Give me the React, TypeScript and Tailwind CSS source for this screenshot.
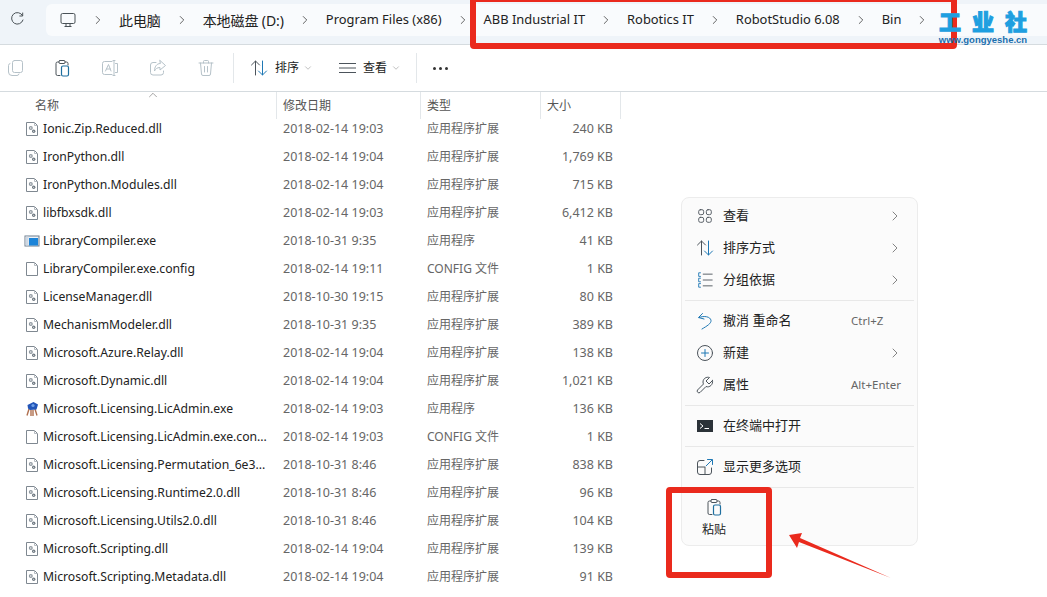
import { ChevronDown, ChevronRight, ChevronUp } from 'lucide-react';

const FONT = "font-['Noto_Sans','Noto_Sans_CJK_SC',sans-serif]";

const crumbs = [
  { label: '此电脑', cjk: true },
  { label: '本地磁盘 (D:)', cjk: true },
  { label: 'Program Files (x86)', cjk: false },
  { label: 'ABB Industrial IT', cjk: false },
  { label: 'Robotics IT', cjk: false },
  { label: 'RobotStudio 6.08', cjk: false },
  { label: 'Bin', cjk: false },
];

type Kind = 'dll' | 'file' | 'exe' | 'lic';

const files: { name: string; date: string; type: string; size: string; kind: Kind }[] = [
  { name: 'Ionic.Zip.Reduced.dll', date: '2018-02-14 19:03', type: '应用程序扩展', size: '240 KB', kind: 'dll' },
  { name: 'IronPython.dll', date: '2018-02-14 19:04', type: '应用程序扩展', size: '1,769 KB', kind: 'dll' },
  { name: 'IronPython.Modules.dll', date: '2018-02-14 19:04', type: '应用程序扩展', size: '715 KB', kind: 'dll' },
  { name: 'libfbxsdk.dll', date: '2018-02-14 19:03', type: '应用程序扩展', size: '6,412 KB', kind: 'dll' },
  { name: 'LibraryCompiler.exe', date: '2018-10-31 9:35', type: '应用程序', size: '41 KB', kind: 'exe' },
  { name: 'LibraryCompiler.exe.config', date: '2018-02-14 19:11', type: 'CONFIG 文件', size: '1 KB', kind: 'file' },
  { name: 'LicenseManager.dll', date: '2018-10-30 19:15', type: '应用程序扩展', size: '80 KB', kind: 'dll' },
  { name: 'MechanismModeler.dll', date: '2018-10-31 9:35', type: '应用程序扩展', size: '389 KB', kind: 'dll' },
  { name: 'Microsoft.Azure.Relay.dll', date: '2018-02-14 19:04', type: '应用程序扩展', size: '138 KB', kind: 'dll' },
  { name: 'Microsoft.Dynamic.dll', date: '2018-02-14 19:04', type: '应用程序扩展', size: '1,021 KB', kind: 'dll' },
  { name: 'Microsoft.Licensing.LicAdmin.exe', date: '2018-02-14 19:03', type: '应用程序', size: '136 KB', kind: 'lic' },
  { name: 'Microsoft.Licensing.LicAdmin.exe.con...', date: '2018-02-14 19:03', type: 'CONFIG 文件', size: '1 KB', kind: 'file' },
  { name: 'Microsoft.Licensing.Permutation_6e3...', date: '2018-10-31 8:46', type: '应用程序扩展', size: '838 KB', kind: 'dll' },
  { name: 'Microsoft.Licensing.Runtime2.0.dll', date: '2018-10-31 8:46', type: '应用程序扩展', size: '96 KB', kind: 'dll' },
  { name: 'Microsoft.Licensing.Utils2.0.dll', date: '2018-10-31 8:46', type: '应用程序扩展', size: '104 KB', kind: 'dll' },
  { name: 'Microsoft.Scripting.dll', date: '2018-02-14 19:04', type: '应用程序扩展', size: '139 KB', kind: 'dll' },
  { name: 'Microsoft.Scripting.Metadata.dll', date: '2018-02-14 19:04', type: '应用程序扩展', size: '91 KB', kind: 'dll' },
];

function FileIcon({ kind }: { kind: Kind }) {
  if (kind === 'exe') {
    return (
      <svg width="16" height="16" viewBox="0 0 16 16" className="shrink-0">
        <rect x="1" y="3" width="14" height="10" fill="#eef3f8" stroke="#6d7c8c" />
        <rect x="1.500" y="3.500" width="3" height="9" fill="#cfd8e2" />
        <rect x="5" y="5" width="9" height="7.500" fill="#1c84d8" />
      </svg>
    );
  }
  if (kind === 'lic') {
    return (
      <svg width="16" height="16" viewBox="0 0 16 16" className="shrink-0">
        <path d="M3 14.500L5 8M13 14.500L11 8M7 15V9M9 15V9" stroke="#b0704f" strokeWidth="1.400" fill="none" />
        <path d="M3.500 4L9.500 1L14 3.500L12.500 8.500L6 9L4 7.500Z" fill="#2255b8" />
        <circle cx="9" cy="4.500" r="1.600" fill="#6fa0e8" />
      </svg>
    );
  }
  return (
    <svg width="16" height="16" viewBox="0 0 16 16" className="shrink-0">
      <path d="M2.500 1.500H10.500L13.500 4.500V14.500H2.500Z" fill="#fff" stroke="#7f8891" />
      <path d="M10.500 1.500V4.500H13.500" fill="none" stroke="#b5bbc1" />
      {kind === 'dll' && (
        <g>
          <circle cx="6.800" cy="7" r="2" fill="#8f98a0" />
          <circle cx="6.800" cy="7" r="0.700" fill="#fff" />
          <circle cx="9.700" cy="10.200" r="1.700" fill="#6f7982" />
          <circle cx="9.700" cy="10.200" r="0.500" fill="#fff" />
        </g>
      )}
    </svg>
  );
}

function Ico({ size = 20, children }: { size?: number; children: React.ReactNode }) {
  return (
    <svg width={size} height={size} viewBox="0 0 20 20" fill="none" strokeLinecap="round" strokeLinejoin="round" className="shrink-0">
      {children}
    </svg>
  );
}

function PasteIcon() {
  const dark = '#4c545b';
  return (
    <Ico>
      <path d="M7 4H5.500A1.500 1.500 0 0 0 4 5.500V16A1.500 1.500 0 0 0 5.500 17.500H8" stroke={dark} />
      <path d="M13 4H14.500A1.500 1.500 0 0 1 16 5.500V7" stroke={dark} />
      <rect x="7" y="2.500" width="6" height="3" rx="1" stroke={dark} />
      <rect x="9.500" y="8" width="7" height="10" rx="1.500" stroke="#1f6f9f" strokeWidth="1.200" />
    </Ico>
  );
}

function SortIcon() {
  return (
    <Ico>
      <path d="M6.500 17V3M2.500 7L6.500 3L10.500 7" stroke="#4c545b" />
      <path d="M13.500 3V17M9.500 13L13.500 17L17.500 13" stroke="#1f78b4" />
    </Ico>
  );
}

function Toolbar() {
  const faint = '#b6c2c9';
  return (
    <div className="h-[47px] flex items-center pl-[6px] border-b border-[#d5dbdf] bg-white">
      <div className="w-[227px] flex items-center">
        <div className="w-[19px] flex justify-center">
          <Ico>
            <rect x="6.500" y="2.500" width="10" height="12" rx="2" stroke={faint} />
            <path d="M4 5.500A2 2 0 0 0 2.500 7.500V14A3.500 3.500 0 0 0 6 17.500H11A2 2 0 0 0 13 16" stroke={faint} />
          </Ico>
        </div>
        <div className="w-[48px] ml-[13px] flex justify-center"><PasteIcon /></div>
        <div className="w-[48px] flex justify-center">
          <Ico>
            <path d="M12 3.500H4.500A2 2 0 0 0 2.500 5.500V14.500A2 2 0 0 0 4.500 16.500H12" stroke={faint} />
            <path d="M5.500 13L8.500 6.500L11 13M6.500 11H10.500" stroke={faint} />
            <path d="M13 2.500H15M13 17.500H15M14 2.500V17.500M15.500 5.500H17.500V14.500H15.500" stroke={faint} />
          </Ico>
        </div>
        <div className="w-[48px] flex justify-center">
          <Ico>
            <path d="M8 4.500H5A2.500 2.500 0 0 0 2.500 7V14.500A2.500 2.500 0 0 0 5 17H13A2.500 2.500 0 0 0 15.500 14.500V13" stroke={faint} />
            <path d="M12 2.500L17.500 7.500L12 12V9.500C9 9.500 7.500 11 6.500 13C6.500 9 8.500 5.500 12 5.500Z" stroke={faint} />
          </Ico>
        </div>
        <div className="w-[48px] flex justify-center">
          <Ico>
            <path d="M3 5H17M7.500 5V3.500A1 1 0 0 1 8.500 2.500H11.500A1 1 0 0 1 12.500 3.500V5M4.500 5L5.500 16A1.500 1.500 0 0 0 7 17.500H13A1.500 1.500 0 0 0 14.500 16L15.500 5M8.500 8.500V14M11.500 8.500V14" stroke={faint} />
          </Ico>
        </div>
      </div>
      <div className="w-px h-[30px] bg-[#e3e7ea]" />
      <div className="ml-[15px] flex items-center text-[12px] text-[#222]">
        <SortIcon />
        <span className="ml-[6px]">排序</span>
        <ChevronDown size={10} strokeWidth={1.500} className="ml-[4px] text-[#9a9a9a]" />
      </div>
      <div className="ml-[26px] flex items-center text-[12px] text-[#222]">
        <svg width="17" height="12" viewBox="0 0 17 12" className="shrink-0" stroke="#4c545b">
          <path d="M0 1.500H17M0 6H17M0 10.500H17" />
        </svg>
        <span className="ml-[7px]">查看</span>
        <ChevronDown size={10} strokeWidth={1.500} className="ml-[4px] text-[#9a9a9a]" />
      </div>
      <div className="w-px h-[30px] bg-[#e3e7ea] ml-[15px]" />
      <div className="ml-[16px] flex gap-[3px]">
        <span className="w-[3px] h-[3px] rounded-full bg-[#333]" />
        <span className="w-[3px] h-[3px] rounded-full bg-[#333]" />
        <span className="w-[3px] h-[3px] rounded-full bg-[#333]" />
      </div>
    </div>
  );
}

function MenuItem({ icon, label, hint, arrow }: { icon: React.ReactNode; label: string; hint?: string; arrow?: boolean }) {
  return (
    <div className="h-[32px] flex items-center pl-[14px] pr-[14px]">
      <div className="w-[18px] flex justify-center">{icon}</div>
      <span className="ml-[9px] text-[13px] text-[#222]">{label}</span>
      {hint && <span className="ml-auto w-[52px] text-[11.500px] text-[#666]">{hint}</span>}
      {arrow && <ChevronRight size={16} strokeWidth={1.200} className="ml-auto text-[#666]" />}
    </div>
  );
}

function Sep() {
  return <div className="h-px bg-[#e8e8e8] mx-[3px]" />;
}

function ContextMenu() {
  return (
    <div className="absolute left-[681px] top-[197px] w-[237px] h-[349px] rounded-[8px] border border-[#ececec] bg-[#fbfbfb]">
      <div className="pt-[2px] pb-[4px]">
        <MenuItem
          arrow
          label="查看"
          icon={
            <Ico size={18}>
              <rect x="3" y="3" width="5.500" height="5.500" rx="1.800" stroke="#4c545b" />
              <rect x="11.500" y="3" width="5.500" height="5.500" rx="1.800" stroke="#4c545b" />
              <rect x="3" y="11.500" width="5.500" height="5.500" rx="1.800" stroke="#4c545b" />
              <rect x="11.500" y="11.500" width="5.500" height="5.500" rx="1.800" stroke="#4c545b" />
            </Ico>
          }
        />
        <MenuItem arrow label="排序方式" icon={<SortIcon />} />
        <MenuItem
          arrow
          label="分组依据"
          icon={
            <Ico size={18}>
              <path d="M8 3.500H18M8 10H18M8 16.500H18" stroke="#4c545b" />
              <path d="M5 2H3V6H5M5 8H3V12H5M5 14H3V18H5" stroke="#1f78b4" />
            </Ico>
          }
        />
      </div>
      <Sep />
      <div className="pt-[4px] pb-[4px]">
        <MenuItem
          label="撤消 重命名"
          hint="Ctrl+Z"
          icon={
            <Ico>
              <path d="M7.500 2.500L3.500 6.500L9 8M4 6.500C9 4.500 15.500 5.500 16 9.500C16.300 12.500 12 15 7 18" stroke="#1f78b4" />
            </Ico>
          }
        />
        <MenuItem
          arrow
          label="新建"
          icon={
            <Ico>
              <circle cx="10" cy="10" r="7.500" stroke="#4c545b" />
              <path d="M10 6.500V13.500M6.500 10H13.500" stroke="#1f78b4" />
            </Ico>
          }
        />
        <MenuItem
          label="属性"
          hint="Alt+Enter"
          icon={
            <Ico>
              <path d="M17.500 5.500L14 9L11 6L14.500 2.500C11.500 1.500 8 3.500 8 7C8 7.800 8.200 8.500 8.500 9L2.500 15A1.800 1.800 0 0 0 5 17.500L11 11.500C14.500 13 18.500 9.500 17.500 5.500Z" stroke="#4c545b" />
            </Ico>
          }
        />
      </div>
      <Sep />
      <div className="py-[4px]">
        <MenuItem
          label="在终端中打开"
          icon={
            <svg width="16" height="12" viewBox="0 0 16 12" className="shrink-0">
              <rect width="16" height="12" fill="#2b3238" />
              <path d="M3 3.500L6 6L3 8.500" stroke="#fff" fill="none" />
              <path d="M7.500 8.500H12" stroke="#fff" />
            </svg>
          }
        />
      </div>
      <Sep />
      <div className="py-[4px]">
        <MenuItem
          label="显示更多选项"
          icon={
            <Ico>
              <path d="M9 3.500H5A2.500 2.500 0 0 0 2.500 6V15A2.500 2.500 0 0 0 5 17.500H14A2.500 2.500 0 0 0 16.500 15V11M2.500 10H10V17.500" stroke="#4c545b" />
              <path d="M11 9L17 3M12.500 2.500H17.500V7.500" stroke="#1f78b4" />
            </Ico>
          }
        />
      </div>
      <Sep />
      <div className="w-[64px] pt-[9px] flex flex-col items-center gap-[4px] text-[12px] text-[#222]">
        <PasteIcon />
        <span>粘贴</span>
      </div>
    </div>
  );
}

export default function App() {
  return (
    <div className={`relative w-[1047px] h-[597px] overflow-hidden bg-white ${FONT}`}>
      {/* address bar */}
      <div className="h-[45px] flex items-start pt-[4px] pl-[9px] bg-[#eff4f9] border-b border-[#d5dbdf]">
        <div className="h-[32px] flex items-center">
          <svg width="16" height="16" viewBox="0 0 16 16" fill="none" stroke="#4a5257" className="shrink-0">
            <path d="M13.500 3.500A5.800 5.800 0 1 0 14 8" strokeLinecap="round" />
            <path d="M13.700 1V4H10.800" strokeLinecap="round" />
          </svg>
        </div>
        <div className="ml-[21px] h-[32px] w-[1010px] flex items-center pl-[14px] rounded-l-[6px] bg-[#f9fbfd] text-[#222]">
          <svg width="16" height="16" viewBox="0 0 16 16" fill="none" stroke="#4a5257" className="shrink-0">
            <rect x="1" y="1.500" width="14" height="10" rx="1.500" />
            <path d="M4.500 14.500H11.500M6 12V14M10 12V14" />
          </svg>
          <span className="w-[43px] flex justify-center"><ChevronRight size={14} strokeWidth={1.300} className="text-[#333]" /></span>
          {crumbs.map((c) => (
            <div key={c.label} className="flex items-center">
              <span className={c.cjk ? 'whitespace-nowrap text-[14px] tracking-[-0.1px]' : 'whitespace-nowrap text-[12.900px]'}>{c.label}</span>
              <span className="w-[42px] flex justify-center"><ChevronRight size={14} strokeWidth={1.300} className="text-[#333]" /></span>
            </div>
          ))}
        </div>
      </div>

      <Toolbar />

      {/* file list */}
      <div className="relative pl-[3px]">
        <ChevronUp size={14} strokeWidth={1} className="absolute left-[146px] top-[-4px] text-[#666]" />
        <div className="grid grid-cols-[274px_144px_120px_80px] h-[27px] mb-[-4px] text-[#555] text-[12px]">
          <div className="pl-[32px] flex items-center border-r border-[#e3e7ea]">名称</div>
          <div className="pl-[6px] flex items-center border-r border-[#e3e7ea]">修改日期</div>
          <div className="pl-[6px] flex items-center border-r border-[#e3e7ea]">类型</div>
          <div className="pl-[6px] flex items-center border-r border-[#e3e7ea]">大小</div>
        </div>
        {files.map((f) => (
          <div key={f.name} className="grid grid-cols-[274px_144px_120px_80px] h-[28px] items-center">
            <div className="pl-[21px] flex items-center gap-[3px] text-[12.200px] text-[#222] whitespace-nowrap">
              <FileIcon kind={f.kind} />
              <span>{f.name}</span>
            </div>
            <div className="pl-[6px] text-[12.500px] text-[#666]">{f.date}</div>
            <div className="pl-[6px] text-[12px] text-[#666]">{f.type}</div>
            <div className="pr-[8px] text-right text-[12.500px] text-[#666]">{f.size}</div>
          </div>
        ))}
      </div>

      <ContextMenu />

      {/* red annotations */}
      <div className="absolute left-[470px] top-[-4px] w-[487px] h-[53px] rounded-[4px] border-[6px] border-[#ea2a1d]" />
      <div className="absolute left-[666px] top-[487px] w-[106px] h-[91px] rounded-[4px] border-[6px] border-[#ea2a1d]" />
      <svg width="120" height="60" viewBox="0 0 120 60" className="absolute left-[780px] top-[526px]">
        <path d="M111 52L20 12L22 7L9 9L17 22L19 16Z" fill="#ea2a1d" />
      </svg>

      {/* watermark */}
      <div className="absolute left-[938px] top-[7px] w-[90px] flex flex-col items-center font-['Noto_Sans_CJK_SC',sans-serif] text-[#1f9fe0]">
        <div className="flex gap-[11px] text-[22px] font-black leading-[27px] [-webkit-text-stroke:1px_#1f9fe0]">
          <span>工</span>
          <span>业</span>
          <span>社</span>
        </div>
        <span className="font-['Liberation_Sans',sans-serif] font-bold text-[9.500px] leading-[11px] text-[#1a6fae] whitespace-nowrap">www.gongyeshe.cn</span>
      </div>
    </div>
  );
}
